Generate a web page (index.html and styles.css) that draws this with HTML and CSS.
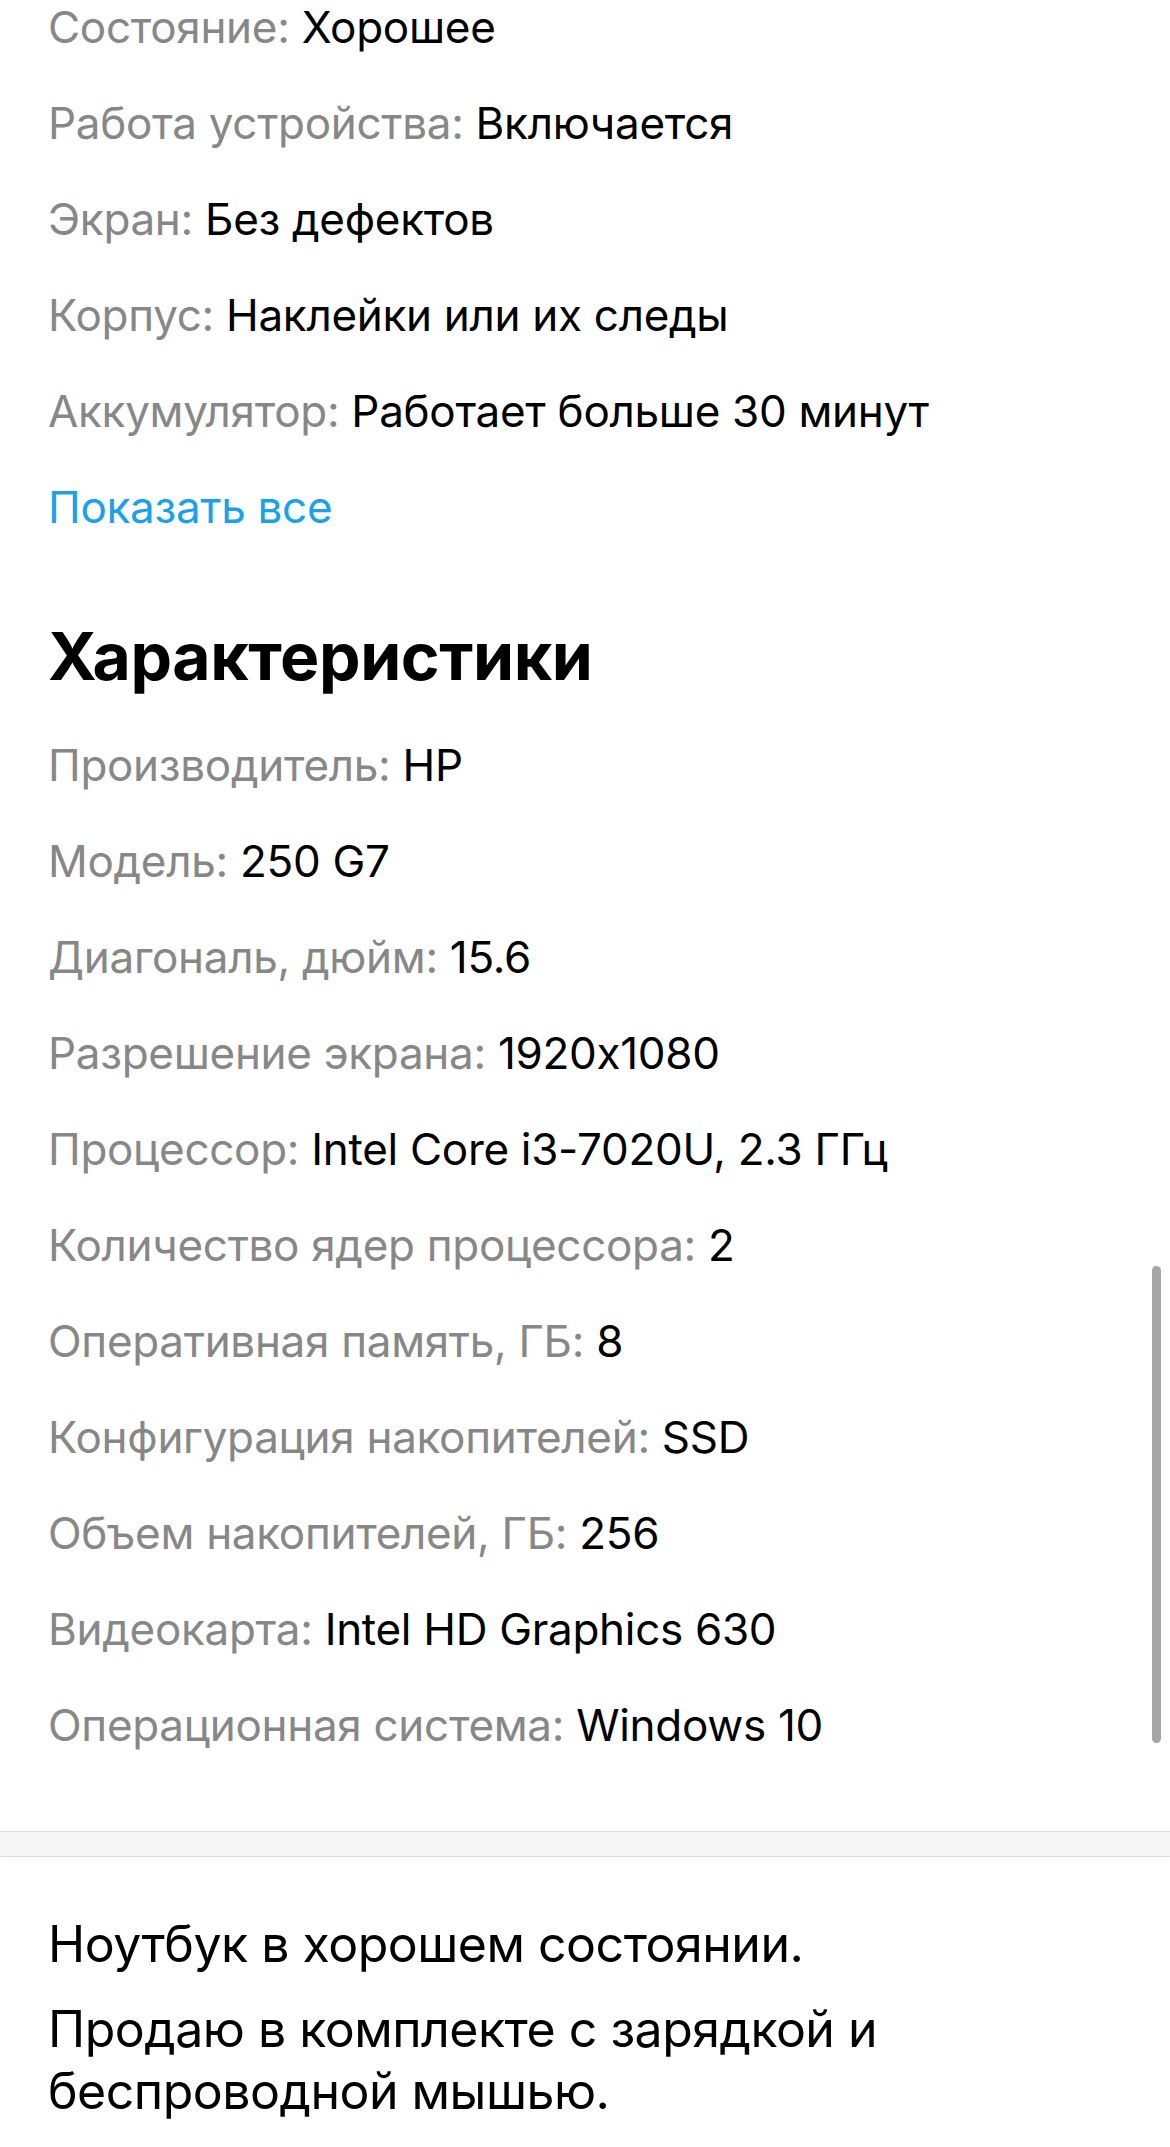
FILE: index.html
```html
<!DOCTYPE html>
<html lang="ru">
<head>
<meta charset="utf-8">
<title>Характеристики</title>
<link rel="stylesheet" href="styles.css">
</head>
<body>
<main class="page">
  <section class="params">
    <div class="row"><span class="label">Состояние:</span> <span class="value">Хорошее</span></div>
    <div class="row"><span class="label">Работа устройства:</span> <span class="value">Включается</span></div>
    <div class="row"><span class="label">Экран:</span> <span class="value">Без дефектов</span></div>
    <div class="row"><span class="label">Корпус:</span> <span class="value">Наклейки или их следы</span></div>
    <div class="row"><span class="label">Аккумулятор:</span> <span class="value">Работает больше 30 минут</span></div>
    <div class="row"><a class="link" href="#">Показать все</a></div>
  </section>

  <section class="specs">
    <h2 class="title">Характеристики</h2>
    <div class="row"><span class="label">Производитель:</span> <span class="value">HP</span></div>
    <div class="row"><span class="label">Модель:</span> <span class="value">250 G7</span></div>
    <div class="row"><span class="label">Диагональ, дюйм:</span> <span class="value">15.6</span></div>
    <div class="row"><span class="label">Разрешение экрана:</span> <span class="value">1920x1080</span></div>
    <div class="row"><span class="label">Процессор:</span> <span class="value">Intel Core i3-7020U, 2.3 ГГц</span></div>
    <div class="row"><span class="label">Количество ядер процессора:</span> <span class="value">2</span></div>
    <div class="row"><span class="label">Оперативная память, ГБ:</span> <span class="value">8</span></div>
    <div class="row"><span class="label">Конфигурация накопителей:</span> <span class="value">SSD</span></div>
    <div class="row"><span class="label">Объем накопителей, ГБ:</span> <span class="value">256</span></div>
    <div class="row"><span class="label">Видеокарта:</span> <span class="value">Intel HD Graphics 630</span></div>
    <div class="row"><span class="label">Операционная система:</span> <span class="value">Windows 10</span></div>
  </section>

  <div class="divider"></div>

  <section class="description">
    <p class="para">Ноутбук в хорошем состоянии.</p>
    <p class="para">Продаю в комплекте с зарядкой и беспроводной мышью.</p>
  </section>
</main>
<div class="scrollbar"></div>
</body>
</html>
```

FILE: styles.css
```css
html, body {
  margin: 0;
  padding: 0;
  background: #ffffff;
}

body {
  font-family: Inter, "Noto Sans", "DejaVu Sans", sans-serif;
  color: #000;
  overflow: hidden;
  height: 2147px;
  position: relative;
}

.page {
  display: flex;
  flex-direction: column;
}

.params,
.specs,
.description {
  padding: 0 48px;
}

.params {
  margin-top: -21px;
}

.row {
  font-size: 44px;
  line-height: 96px;
  letter-spacing: -0.3px;
  white-space: nowrap;
}

.label {
  color: #878787;
}

.value {
  color: #000;
}

.link {
  color: #1aa1ea;
  text-decoration: none;
}

.specs {
  margin-top: 61px;
}

.title {
  margin: 0 0 21px 0;
  font-size: 66px;
  line-height: 80px;
  font-weight: 700;
  letter-spacing: -0.4px;
}

.divider {
  margin-top: 58px;
  height: 24px;
  background: #f6f6f6;
  border-top: 1px solid #dedede;
  border-bottom: 1px solid #dedede;
  box-shadow: 0 4px 6px rgba(0, 0, 0, 0.02);
}

.description {
  margin-top: 56px;
  display: flex;
  flex-direction: column;
  gap: 23px;
}

.para {
  margin: 0;
  font-size: 50px;
  line-height: 62px;
  letter-spacing: -0.5px;
  color: #000;
}

.scrollbar {
  position: absolute;
  left: 1152px;
  top: 1266px;
  width: 9px;
  height: 477px;
  border-radius: 5px;
  background: #a6a6a6;
}
```
